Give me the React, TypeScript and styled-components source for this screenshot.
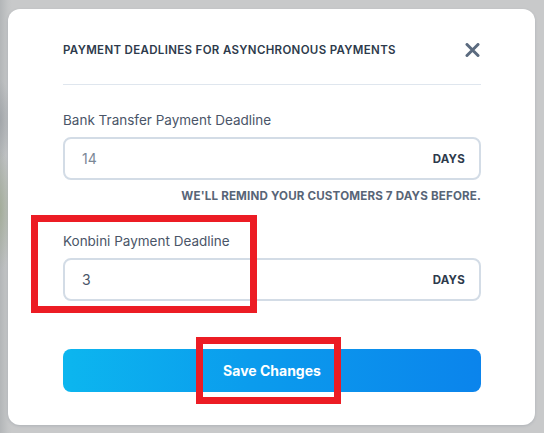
import React from "react";
import styled, { createGlobalStyle } from "styled-components";

const Global = createGlobalStyle`
  * { box-sizing: border-box; }
  html, body { margin: 0; padding: 0; }
  body {
    width: 544px;
    height: 433px;
    overflow: hidden;
    font-family: Inter, "Noto Sans", sans-serif;
    background: #c8c9ca;
  }
`;

const Backdrop = styled.div`
  position: relative;
  width: 544px;
  height: 433px;
  padding: 9px 9px 8px 8px;
  background:
    radial-gradient(ellipse 14px 60px at 0px 210px, rgba(150, 165, 130, 0.55), transparent),
    radial-gradient(ellipse 12px 40px at 0px 120px, rgba(150, 155, 160, 0.6), transparent),
    linear-gradient(90deg, #b3b6b8 0px, #c4c6c7 8px, #c8c9ca 12px, #c8c9ca 100%);
`;

const Modal = styled.div`
  width: 527px;
  height: 416px;
  background: #ffffff;
  border-radius: 12px;
  padding: 0 54px 32px 55px;
  display: flex;
  flex-direction: column;
  box-shadow: 0 1px 3px rgba(60, 80, 100, 0.18);
`;

const Header = styled.div`
  display: flex;
  align-items: center;
  justify-content: space-between;
  padding: 34px 0 27px;
  border-bottom: 1px solid #dfe6ee;
`;

const Title = styled.h2`
  margin: 0;
  font-size: 11.5px;
  line-height: 14px;
  font-weight: 600;
  letter-spacing: 0.33px;
  color: #2d3a4b;
  text-transform: uppercase;
`;

const CloseButton = styled.button`
  border: 0;
  background: transparent;
  padding: 0;
  margin-right: 1px;
  width: 15px;
  height: 14px;
  display: flex;
  align-items: center;
  justify-content: center;
  cursor: pointer;
`;

const Field = styled.div<{ $top: number }>`
  display: flex;
  flex-direction: column;
  margin-top: ${(p) => p.$top}px;
`;

const Label = styled.label`
  font-size: 13.5px;
  line-height: 16px;
  color: #4a5568;
  margin-bottom: 9px;
`;

const InputBox = styled.div`
  height: 43px;
  border: 2px solid #d3dce6;
  border-radius: 8px;
  display: flex;
  align-items: center;
  justify-content: space-between;
  padding: 0 14px 0 17px;
`;

const Value = styled.span<{ $muted?: boolean }>`
  font-size: 14px;
  color: ${(p) => (p.$muted ? "#7b8796" : "#4a5568")};
`;

const Unit = styled.span`
  font-size: 11.5px;
  font-weight: 700;
  color: #2d3a4b;
  letter-spacing: 0.02em;
`;

const Helper = styled.div`
  margin-top: 9px;
  text-align: right;
  font-size: 11.6px;
  line-height: 14px;
  font-weight: 700;
  color: #586577;
  letter-spacing: 0.16px;
  text-transform: uppercase;
`;

const SaveButton = styled.button`
  margin-top: 48px;
  height: 43px;
  border: 0;
  border-radius: 8px;
  background: linear-gradient(90deg, #0cb6ef 0%, #0b9ced 45%, #0b84ec 100%);
  color: #ffffff;
  font-family: inherit;
  font-size: 14px;
  font-weight: 700;
  cursor: pointer;
`;

const Annotation = styled.div<{ $x: number; $y: number; $w: number; $h: number }>`
  position: absolute;
  left: ${(p) => p.$x}px;
  top: ${(p) => p.$y}px;
  width: ${(p) => p.$w}px;
  height: ${(p) => p.$h}px;
  border: 7px solid #ec1c24;
  pointer-events: none;
`;

export default function App() {
  return (
    <>
      <Global />
      <Backdrop>
        <Modal>
          <Header>
            <Title>Payment deadlines for asynchronous payments</Title>
            <CloseButton aria-label="Close">
              <svg width="15" height="14" viewBox="0 0 15 14">
                <path
                  d="M2 1.5 L13 12.5 M13 1.5 L2 12.5"
                  stroke="#5b6b7f"
                  strokeWidth="3"
                  strokeLinecap="round"
                />
              </svg>
            </CloseButton>
          </Header>
          <Field $top={27}>
            <Label>Bank Transfer Payment Deadline</Label>
            <InputBox>
              <Value $muted>14</Value>
              <Unit>DAYS</Unit>
            </InputBox>
            <Helper>We'll remind your customers 7 days before.</Helper>
          </Field>
          <Field $top={30}>
            <Label>Konbini Payment Deadline</Label>
            <InputBox>
              <Value>3</Value>
              <Unit>DAYS</Unit>
            </InputBox>
          </Field>
          <SaveButton>Save Changes</SaveButton>
        </Modal>
        <Annotation $x={31} $y={215} $w={226} $h={98} />
        <Annotation $x={196} $y={337} $w={145} $h={67} />
      </Backdrop>
    </>
  );
}
